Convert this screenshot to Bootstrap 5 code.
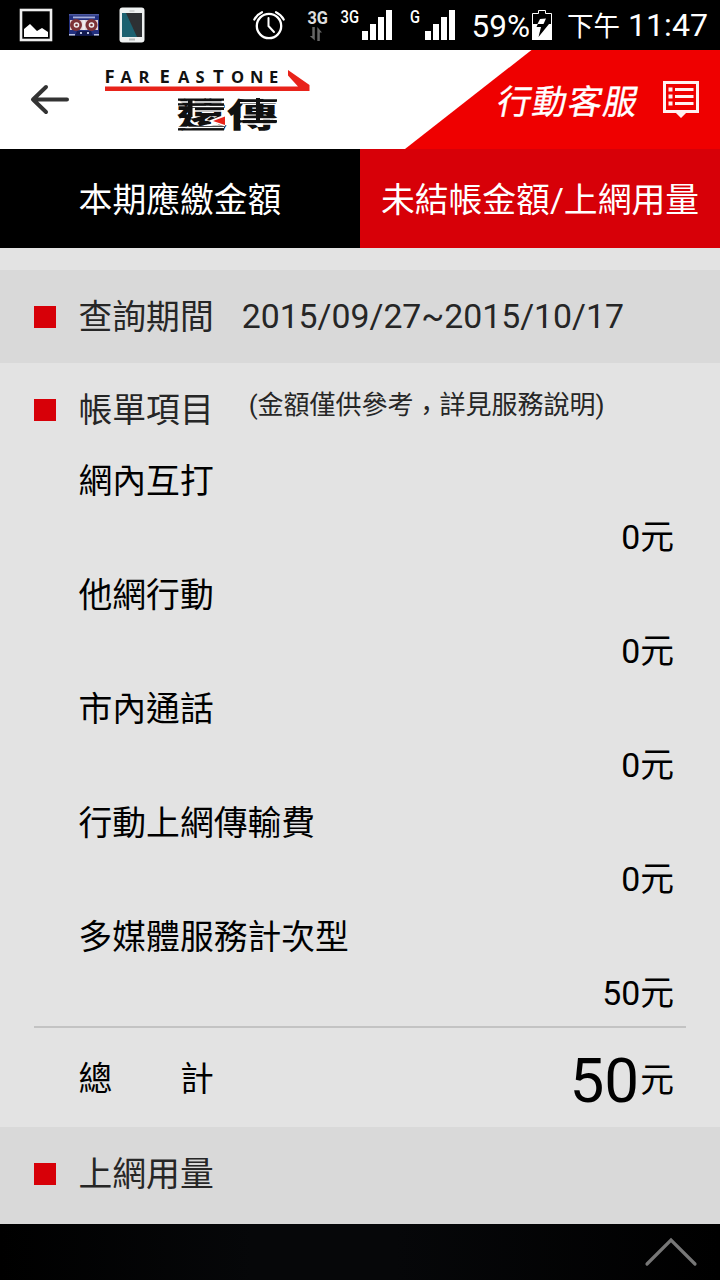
<!DOCTYPE html>
<html lang="zh-Hant">
<head>
<meta charset="utf-8">
<meta name="viewport" content="width=device-width, initial-scale=1">
<title>遠傳 行動客服</title>
<link rel="stylesheet" href="https://cdn.jsdelivr.net/npm/bootstrap@5.3.0/dist/css/bootstrap.min.css">
<style>
body{font-family:Roboto,"Noto Sans CJK TC",sans-serif;font-size:33.8px;line-height:56px;background:#e3e3e3;color:#000;width:720px;height:1280px;overflow:hidden}
svg{display:block;flex:none}
.status{height:50px;background:#000}
.topbar{height:99px;background:#fff}
.tabs-row{height:99px;color:#fff}
.tabs-row>div{padding-top:4px}
.tab-dark{background:#000}
.tab-red{background:#d70008}
.band{background:#d9d9d9}
.sect{color:#262626;padding-left:34px}
.sq{width:22px;height:22px;background:#d70008;margin-right:22.500px;flex:none}
.heading{padding-top:2px}
.period{height:93px;margin-top:22px}
.dates{margin-left:28px;letter-spacing:-.02px}
.bill-head{height:89px;padding-top:5px}
.note{font-size:26px;margin-left:35px;padding-bottom:11px}
.comma{position:relative;top:6px}
.item{height:57px;line-height:60px;padding-left:78.500px;padding-right:46px}
.item.text-end{line-height:58px}
.rule{height:2px;background:#c3c3c3;margin:4px 34px 0}
.total{height:99px;padding-left:78.500px;padding-right:46px;padding-top:3px}
.big{font-size:62px;margin-right:1px;padding-top:3px}
.yuan{padding-top:4px}
.usage{height:97px;padding-bottom:3px}
.bottombar{height:56px;background:linear-gradient(90deg,#000,#060709 35%,#060709 55%,#000);padding-right:22px}
</style>
</head>
<body>
<div class="status">
<svg width="720" height="50" viewBox="0 0 720 50" fill="#fff" font-family="Roboto,'Noto Sans CJK TC',sans-serif">
  <rect x="21" y="10" width="30" height="30" fill="none" stroke="#eee" stroke-width="2.600"/>
  <path d="M24 37V29L30 24L34 28L37 31L42 28L48 32V37Z"/>
  <g>
    <rect x="69" y="14" width="30" height="21.500" fill="#23307f"/>
    <rect x="69" y="14" width="30" height="1.500" fill="#4c589f"/>
    <rect x="73" y="16.500" width="22" height="1.800" fill="#a5afdc"/>
    <rect x="70" y="20" width="28" height="10" fill="#e2d6d9"/>
    <circle cx="76" cy="25" r="6" fill="#7d3336"/><circle cx="91.500" cy="25" r="6" fill="#7d3336"/>
    <rect x="82.500" y="20" width="2.500" height="10" fill="#eee"/>
    <circle cx="76.500" cy="25" r="2.800" fill="#eee"/><circle cx="91.500" cy="25" r="2.800" fill="#eee"/>
    <circle cx="76.500" cy="25" r="1.300" fill="#7d3336"/><circle cx="91.500" cy="25" r="1.300" fill="#7d3336"/>
    <path d="M75 35.500L77 31H91L93 35.500Z" fill="#11194f"/>
    <path d="M69 34h6v1.500h-6zM94 34h5v1.500h-5zM80 32h2v2h-2zM87 32h2v2h-2z" fill="#bcc3df"/>
  </g>
  <rect x="119.500" y="7.500" width="25" height="35" rx="3" fill="#eef1f1"/>
  <rect x="122" y="13" width="20" height="24" fill="#2d3033"/><path d="M122 13H126L137 37H122Z" fill="#1c6170"/>
  <path d="M129.500 10.500h5v1h-5zM129 38.500h6v2h-6z" fill="#b8bcbc"/>
  <g fill="none" stroke="#fff" stroke-linecap="round">
    <circle cx="269" cy="26" r="12.200" stroke-width="2.300"/>
    <path d="M268.500 18V26L274 32" stroke-width="2"/>
    <path d="M254.300 19.500Q257 14.500 262 12.200M283.700 19.500Q281 14.500 276 12.200" stroke-width="2.200"/>
  </g>
  <text x="307.500" y="24" font-size="18" font-weight="700" fill="#ddd" textLength="20.500" lengthAdjust="spacingAndGlyphs">3G</text>
  <path d="M312.300 27V36H309.800L314.800 40.500V27ZM317.300 41V27L322 32.500H319.800V41Z" fill="#666"/>
  <text x="340.500" y="23" font-size="18" font-weight="500" textLength="18.500" lengthAdjust="spacingAndGlyphs">3G</text>
  <path d="M362 31h6v9h-6zM370 24h6v16h-6zM378 17h6v23h-6zM386 10h6v30h-6z"/>
  <text x="410" y="23" font-size="18" font-weight="500" textLength="10" lengthAdjust="spacingAndGlyphs">G</text>
  <path d="M425 31h6v9h-6zM433 24h6v16h-6zM441 17h6v23h-6zM449 10h6v30h-6z"/>
  <text x="471.500" y="37" font-size="32" textLength="58.500" lengthAdjust="spacingAndGlyphs">59%</text>
  <path d="M532.500 39.500V13.500H538.500V10.500H545.500V13.500H551.500V39.500Z" fill="none" stroke="#fff"/>
  <path d="M532 24H552V40H532Z"/>
  <path d="M540 19L546 18.500L543.500 24H549L538.500 37L541 27H536.500Z" fill="#000"/><path d="M540 19L546 18.500L543.500 24H537.500Z"/>
  <text x="567" y="36" font-size="27" textLength="53" lengthAdjust="spacingAndGlyphs">下午</text>
  <text x="628" y="36" font-size="32" textLength="80" lengthAdjust="spacingAndGlyphs">11:47</text>
</svg>
</div>
<header class="topbar">
<svg width="720" height="99" viewBox="0 50 720 99">
  <path d="M67 99.500H33M46 87L33 99.500L46 112" fill="none" stroke="#333" stroke-width="4" stroke-linecap="round" stroke-linejoin="round"/>
  <g font-family="'Open Sans',sans-serif" font-weight="700" fill="#111">
    <text y="83.200" font-size="16.500"><tspan font-size="18.500" x="104.500">F</tspan><tspan x="120.500">A</tspan><tspan x="138.500">R</tspan><tspan font-size="18.500" x="159.500">E</tspan><tspan x="178">A</tspan><tspan x="195.500">S</tspan><tspan font-size="18.500" x="213">T</tspan><tspan x="231">O</tspan><tspan x="250">N</tspan><tspan x="269">E</tspan></text>
  </g>
  <path d="M105 86.500H298L288 75.500V70L309.500 85V91H105Z" fill="#e8231a"/>
  <text x="176.500" y="126.500" font-family="'Noto Sans CJK TC',sans-serif" font-size="33" font-weight="900" fill="#111" textLength="101" lengthAdjust="spacingAndGlyphs">遠傳</text>
  <path d="M178 97h46M178 102h46M190 106.500h34M194 111h30M240 98h37M240 102.800h37M240 119h37M240 124h37M177 127.500h47" stroke="#fff" stroke-width="1.600"/>
  <path d="M178 98.500h28v2.200h-28zM209.500 98.500h14.500v2.200h-14.500zM178 103.200h28v2.200h-28zM209.500 103.200h14.500v2.200h-14.500zM195 107.800h29v2.200h-29zM188 100h4.500v17h-4.500zM239 99.200h38v2.500h-38zM239 120.200h38v2.400h-38zM256 98h4v22h-4zM178 128.300h46v2.200h-46z" fill="#111"/>
  <path d="M208 121L225 114.500V126.500Z" fill="#fff"/>
  <path d="M213 121L225 116.500V125Z" fill="#e8231a"/>
  <path d="M531.500 50H720V149H405Z" fill="#ef0000"/>
  <text transform="translate(495.500 113.800) skewX(-11)" font-family="'Noto Sans CJK TC',sans-serif" font-size="34" font-weight="400" fill="#fff" stroke="#fff" stroke-width=".35" textLength="140" lengthAdjust="spacing">行動客服</text>
  <path d="M664.500 82.500H697.500V111.500H664.500Z" fill="none" stroke="#fff1f1" stroke-width="3"/>
  <path d="M675 112H687L681 118ZM668.500 87.500h4v4h-4zM668.500 94.500h4v4h-4zM668.500 101.500h4v4h-4zM675 88h18.500v3H675zM675 95h18.500v3H675zM675 102h18.500v3H675z" fill="#fff1f1"/>
</svg>
</header>
<nav class="tabs-row d-flex text-center">
  <div class="tab-dark w-50 d-flex align-items-center justify-content-center"><span>本期應繳金額</span></div>
  <div class="tab-red w-50 d-flex align-items-center justify-content-center"><span>未結帳金額/上網用量</span></div>
</nav>
<main>
  <section class="sect band period d-flex align-items-center"><i class="sq"></i><span class="heading">查詢期間</span><span class="dates">2015/09/27~2015/10/17</span></section>
  <section class="sect bill-head d-flex align-items-center"><i class="sq"></i><span class="heading">帳單項目</span><span class="note">(金額僅供參考<span class="comma">，</span>詳見服務說明)</span></section>
  <div class="item">網內互打</div><div class="item text-end">0元</div>
  <div class="item">他網行動</div><div class="item text-end">0元</div>
  <div class="item">市內通話</div><div class="item text-end">0元</div>
  <div class="item">行動上網傳輸費</div><div class="item text-end">0元</div>
  <div class="item">多媒體服務計次型</div><div class="item text-end">50元</div>
  <div class="rule"></div>
  <section class="total d-flex align-items-center justify-content-between"><span class="heading">總　　計</span><span class="d-flex align-items-center"><span class="big">50</span><span class="yuan">元</span></span></section>
  <section class="sect band usage d-flex align-items-center"><i class="sq"></i><span class="heading">上網用量</span></section>
</main>
<footer class="bottombar d-flex align-items-center justify-content-end">
<svg width="54" height="56" viewBox="0 0 54 56"><path d="M3 40L27 16L51 40" fill="none" stroke="#777" stroke-width="3.200" stroke-linecap="round"/></svg>
</footer>
<script src="https://cdn.jsdelivr.net/npm/bootstrap@5.3.0/dist/js/bootstrap.bundle.min.js"></script>
</body>
</html>
